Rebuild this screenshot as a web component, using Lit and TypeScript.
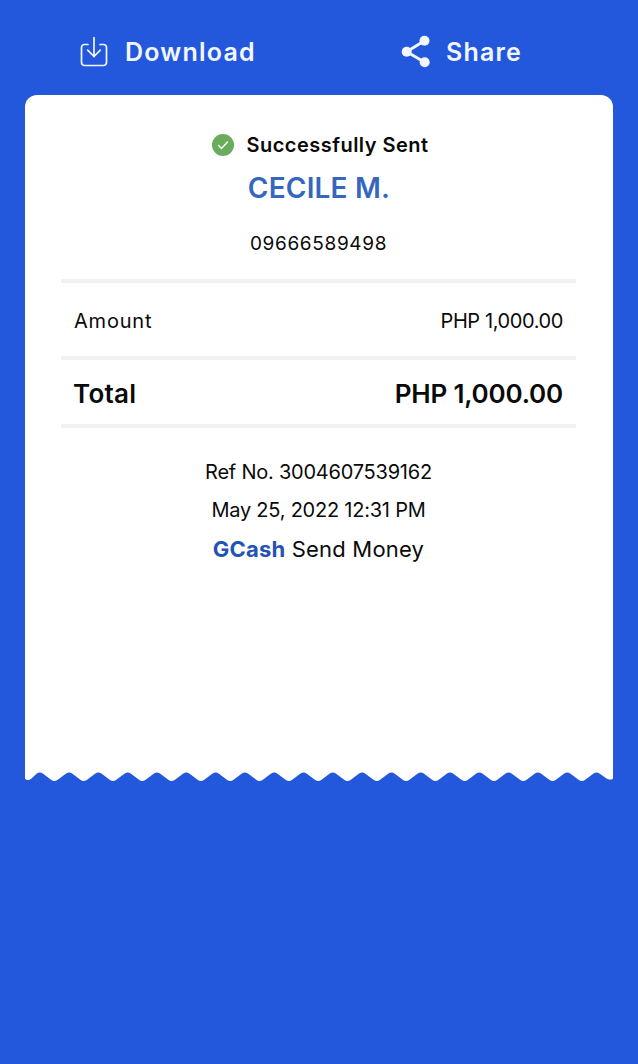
import { LitElement, html, css, svg } from "lit";
import { customElement } from "lit/decorators.js";

const W = 588, H = 14, P = 29.3;
function wavePath() {
  // Rounded scallop of the torn receipt edge; x is relative to the card's left edge.
  const T = 3.4, B = 14.1, r = 3;
  const s = (B - T) / (P / 2);
  const e = r * s;
  let d = `M0 0 H${W} V10 Q${W} 11.5 ${W - 2} 11.5 H${W - 3.5} Q${W - 5} 11.5 ${W - 6.5} 10.5`;
  let x = 571.5;
  while (x > 14) {
    const v = x - P / 2;
    d += ` L${(x + r).toFixed(1)} ${(T + e).toFixed(1)} Q${x.toFixed(1)} ${T} ${(x - r).toFixed(1)} ${(T + e).toFixed(1)}`;
    if (v > 6) {
      d += ` L${(v + r).toFixed(1)} ${(B - e).toFixed(1)} Q${v.toFixed(1)} ${B} ${(v - r).toFixed(1)} ${(B - e).toFixed(1)}`;
    }
    x -= P;
  }
  d += ` L6.5 10.5 Q4.5 12 3 12 Q1 12 0 10.5 Z`;
  return d;
}

@customElement("app-root")
export class AppRoot extends LitElement {
  static styles = css`
    :host {
      display: block;
      width: 638px;
      height: 1064px;
      background: #2358dd;
      font-family: Inter, "Liberation Sans", sans-serif;
      color: #0a0a0a;
      overflow: hidden;
    }
    .head {
      height: 95px;
      display: grid;
      grid-template-columns: 320px 318px;
      box-sizing: border-box;
      padding-top: 8px;
    }
    .act {
      display: flex;
      align-items: center;
      color: #f2f6fe;
      font-size: 25px;
      font-weight: 600;
      letter-spacing: 1.2px;
    }
    .act.dl { padding-left: 79px; gap: 16px; }
    .act.sh { padding-left: 80px; gap: 15px; }
    .act svg { display: block; flex: none; }
    .card {
      margin: 0 25px;
      width: 588px;
      height: 687px;
      display: flex;
      flex-direction: column;
    }
    .paper {
      flex: 1;
      background: #fff;
      border-radius: 12px 12px 0 0;
      padding: 0 37px 0 36px;
      display: flex;
      flex-direction: column;
      text-align: center;
    }
    .wave { display: block; flex: none; margin-top: -1px; }
    .status {
      margin-top: 35px;
      height: 30px;
      display: flex;
      align-items: center;
      justify-content: center;
      gap: 12px;
      padding-left: 4px;
      font-size: 20px;
      font-weight: 600;
      letter-spacing: 0.48px;
    }
    .status svg { display: block; }
    .name {
      margin-top: 9px;
      height: 38px;
      line-height: 38px;
      font-size: 28px;
      font-weight: 600;
      letter-spacing: 0.2px;
      padding-left: 1px;
      color: #3566c0;
    }
    .phone {
      margin-top: 22px;
      height: 30px;
      line-height: 30px;
      font-size: 19px;
      letter-spacing: 0.65px;
    }
    .row {
      display: flex;
      justify-content: space-between;
      align-items: center;
      box-sizing: border-box;
      padding: 3px 13px 0;
      border-top: 4px solid #f1f1f2;
    }
    .row.amt { margin-top: 20px; height: 77px; font-size: 20px; }
    .amt .label { letter-spacing: 0.8px; }
    .amt .value { letter-spacing: -0.4px; }
    .row.tot { height: 72px; font-size: 26px; font-weight: 600; border-bottom: 4px solid #f1f1f2; }
    .tot .label { letter-spacing: 0.25px; margin-left: -1px; }
    .tot .value { letter-spacing: -0.2px; }
    .foot { font-size: 20px; height: 38px; line-height: 38px; letter-spacing: -0.23px; }
    .foot.first { margin-top: 25px; }
    .foot.brand { font-size: 22px; height: 40px; line-height: 40px; letter-spacing: 0.2px; }
    .brand b { color: #2353b4; font-weight: 700; }
  `;

  render() {
    return html`
      <div class="head">
        <div class="act dl">
          <svg width="30" height="32" viewBox="0 0 30 32" fill="none" stroke="#f2f6fe" stroke-width="1.7" stroke-linecap="round" stroke-linejoin="round">
            <path d="M9 8.5H5.5a3 3 0 0 0-3 3V26.5a3 3 0 0 0 3 3h19a3 3 0 0 0 3-3V11.5a3 3 0 0 0-3-3H21" />
            <path d="M15 1.5V20.5" />
            <path d="M8.7 14.2L15 20.5l6.3-6.3" />
          </svg>
          <span>Download</span>
        </div>
        <div class="act sh">
          <svg width="31" height="33" viewBox="0 0 31 33" fill="#f2f6fe" stroke="#f2f6fe">
            <circle cx="6.7" cy="16.7" r="5" stroke="none" />
            <circle cx="24.5" cy="5.7" r="5" stroke="none" />
            <circle cx="24.7" cy="27.3" r="5" stroke="none" />
            <path d="M6.7 16.7L24.5 5.7M6.7 16.7L24.7 27.3" stroke-width="3" fill="none" />
          </svg>
          <span>Share</span>
        </div>
      </div>
      <div class="card">
        <div class="paper">
          <div class="status">
            <svg width="22" height="22" viewBox="0 0 22 22">
              <circle cx="11" cy="11" r="11" fill="#69ac5c" />
              <path d="M6.5 11.5l3 3 6-6.5" fill="none" stroke="#fff" stroke-width="1.4" stroke-linecap="round" stroke-linejoin="round" />
            </svg>
            <span>Successfully Sent</span>
          </div>
          <div class="name">CECILE M.</div>
          <div class="phone">09666589498</div>
          <div class="row amt"><span class="label">Amount</span><span class="value">PHP 1,000.00</span></div>
          <div class="row tot"><span class="label">Total</span><span class="value">PHP 1,000.00</span></div>
          <div class="foot first">Ref No. 3004607539162</div>
          <div class="foot">May 25, 2022 12:31 PM</div>
          <div class="foot brand"><b>GCash</b> Send Money</div>
        </div>
        <svg class="wave" width="${W}" height="${H}" viewBox="0 0 ${W} ${H}">
          ${svg`<path d=${wavePath()} fill="#fff" />`}
        </svg>
      </div>
    `;
  }
}
